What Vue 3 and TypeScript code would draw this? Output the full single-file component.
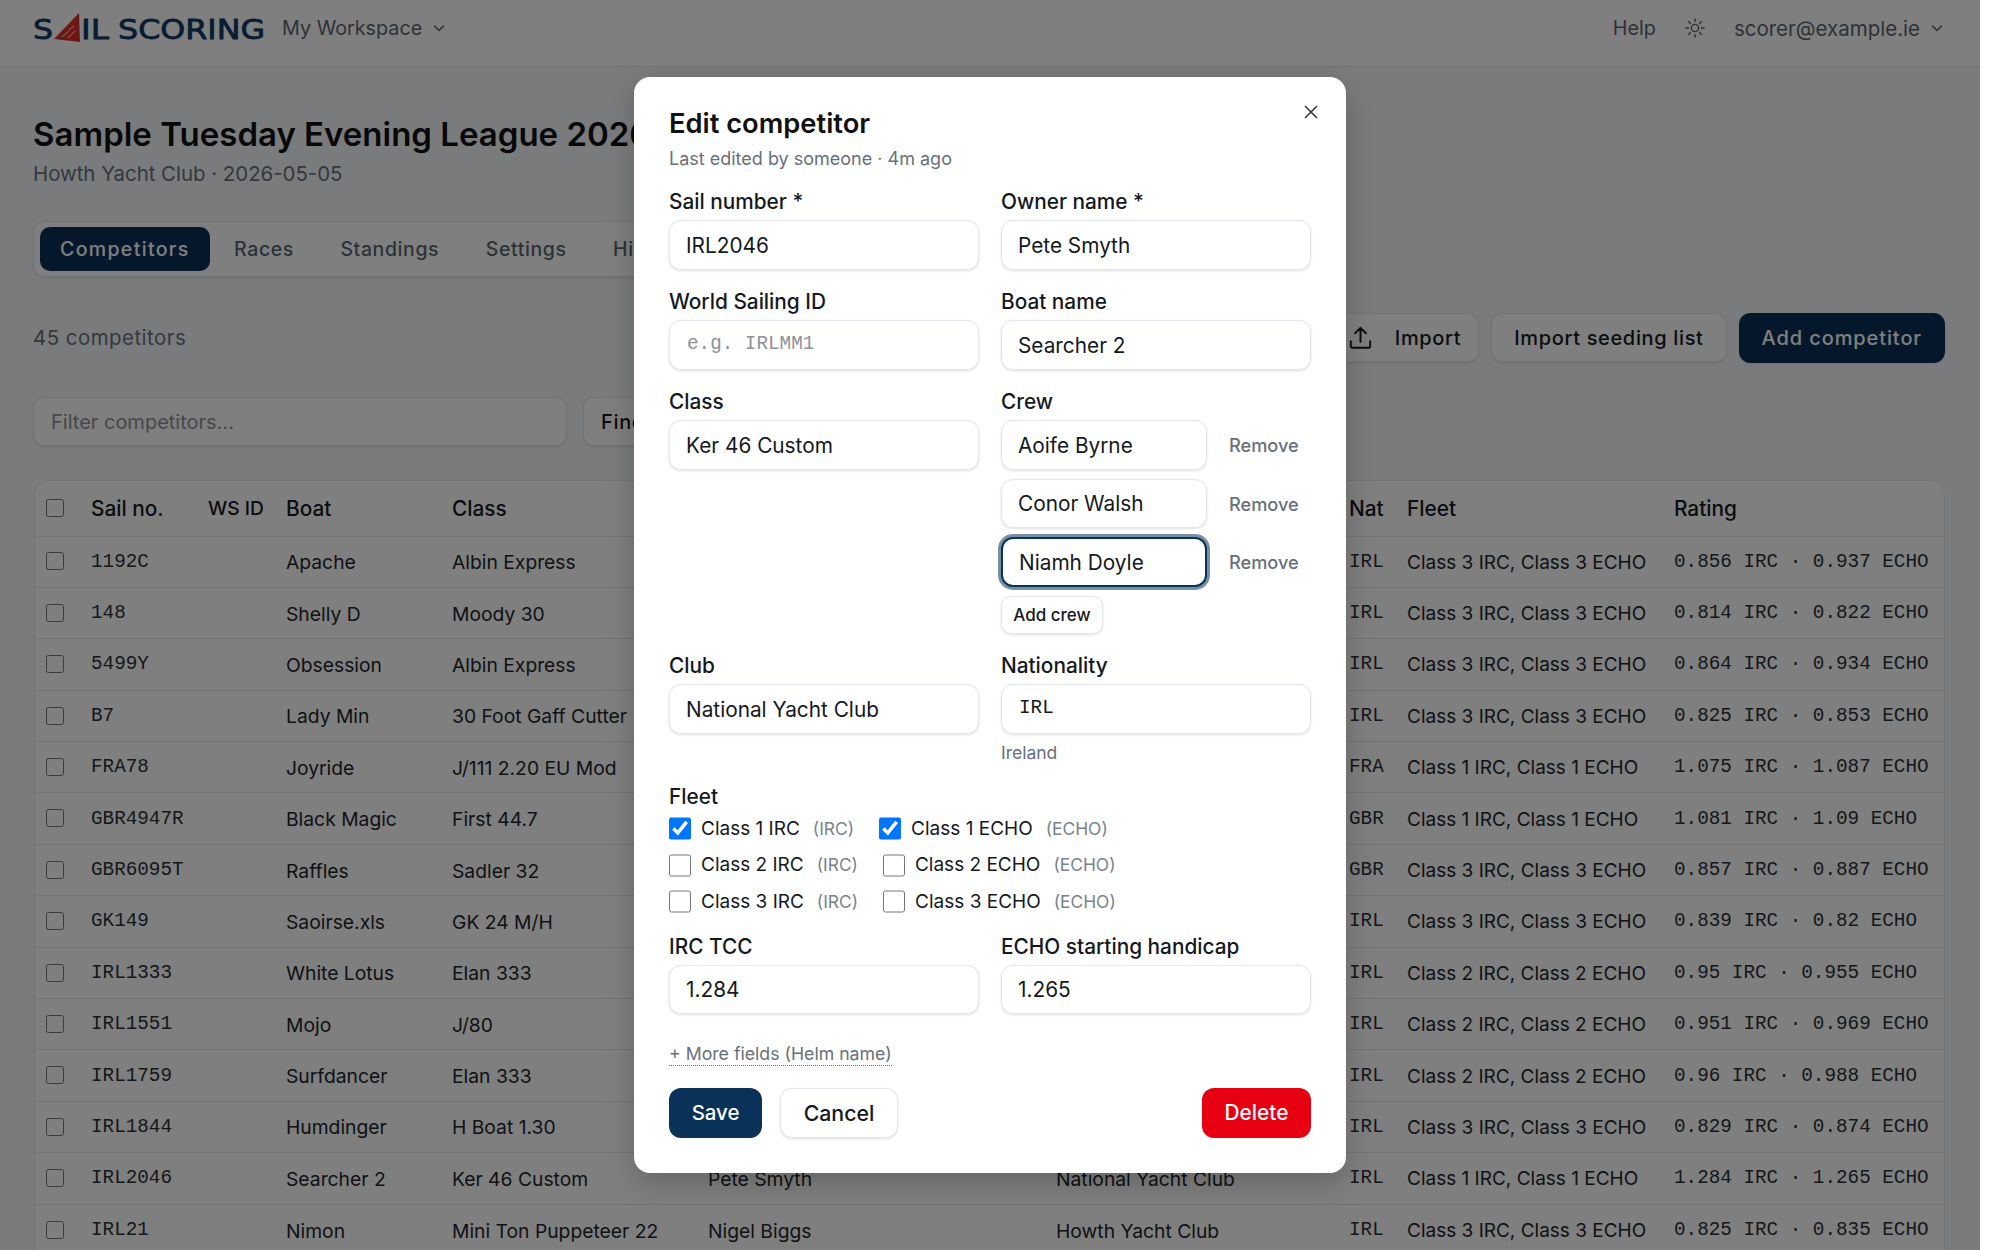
<script setup lang="ts">
import { ref } from 'vue'

interface Row {
  sail: string
  boat: string
  cls: string
  owner: string
  club: string
  nat: string
  fleet: number
  irc: string
  echo: string
}

const rows = ref<Row[]>([
  { sail: '1192C', boat: 'Apache', cls: 'Albin Express', owner: 'Tom Byrne', club: 'Howth Yacht Club', nat: 'IRL', fleet: 3, irc: '0.856', echo: '0.937' },
  { sail: '148', boat: 'Shelly D', cls: 'Moody 30', owner: 'Ann Daly', club: 'Howth Yacht Club', nat: 'IRL', fleet: 3, irc: '0.814', echo: '0.822' },
  { sail: '5499Y', boat: 'Obsession', cls: 'Albin Express', owner: 'Paul Kelly', club: 'Howth Yacht Club', nat: 'IRL', fleet: 3, irc: '0.864', echo: '0.934' },
  { sail: 'B7', boat: 'Lady Min', cls: '30 Foot Gaff Cutter', owner: 'Jim Ryan', club: 'Howth Yacht Club', nat: 'IRL', fleet: 3, irc: '0.825', echo: '0.853' },
  { sail: 'FRA78', boat: 'Joyride', cls: 'J/111 2.20 EU Mod', owner: 'Luc Martin', club: 'National Yacht Club', nat: 'FRA', fleet: 1, irc: '1.075', echo: '1.087' },
  { sail: 'GBR4947R', boat: 'Black Magic', cls: 'First 44.7', owner: 'Sam Hughes', club: 'Howth Yacht Club', nat: 'GBR', fleet: 1, irc: '1.081', echo: '1.09' },
  { sail: 'GBR6095T', boat: 'Raffles', cls: 'Sadler 32', owner: 'Ian Wood', club: 'Howth Yacht Club', nat: 'GBR', fleet: 3, irc: '0.857', echo: '0.887' },
  { sail: 'GK149', boat: 'Saoirse.xls', cls: 'GK 24 M/H', owner: 'Mary Nolan', club: 'Howth Yacht Club', nat: 'IRL', fleet: 3, irc: '0.839', echo: '0.82' },
  { sail: 'IRL1333', boat: 'White Lotus', cls: 'Elan 333', owner: 'Sean Burke', club: 'Howth Yacht Club', nat: 'IRL', fleet: 2, irc: '0.95', echo: '0.955' },
  { sail: 'IRL1551', boat: 'Mojo', cls: 'J/80', owner: 'Cian Lynch', club: 'Howth Yacht Club', nat: 'IRL', fleet: 2, irc: '0.951', echo: '0.969' },
  { sail: 'IRL1759', boat: 'Surfdancer', cls: 'Elan 333', owner: 'Orla Walsh', club: 'Howth Yacht Club', nat: 'IRL', fleet: 2, irc: '0.96', echo: '0.988' },
  { sail: 'IRL1844', boat: 'Humdinger', cls: 'H Boat 1.30', owner: 'Kate Moran', club: 'Howth Yacht Club', nat: 'IRL', fleet: 3, irc: '0.829', echo: '0.874' },
  { sail: 'IRL2046', boat: 'Searcher 2', cls: 'Ker 46 Custom', owner: 'Pete Smyth', club: 'National Yacht Club', nat: 'IRL', fleet: 1, irc: '1.284', echo: '1.265' },
  { sail: 'IRL21', boat: 'Nimon', cls: 'Mini Ton Puppeteer 22', owner: 'Nigel Biggs', club: 'Howth Yacht Club', nat: 'IRL', fleet: 3, irc: '0.825', echo: '0.835' }
])

const tabs = ['Competitors', 'Races', 'Standings', 'Settings', 'History']
const crew = ref(['Aoife Byrne', 'Conor Walsh', 'Niamh Doyle'])
const fleets = [1, 2, 3]
</script>

<template>
  <div class="page">
    <header class="topbar">
      <div class="top-left">
        <svg class="logo" width="234" height="32" viewBox="0 0 234 32">
          <text class="logo-text" x="0" y="27" textLength="20" lengthAdjust="spacingAndGlyphs">S</text>
          <polygon points="46,1 21,27 47,30" fill="#d8322a" />
          <path d="M29 25l7-6M35 26l7-7M41 14l-5 4" stroke="#eee" stroke-width="1" fill="none" />
          <text class="logo-text" x="48" y="27" textLength="28" lengthAdjust="spacingAndGlyphs">IL</text>
          <text class="logo-text" x="85" y="27" textLength="147" lengthAdjust="spacingAndGlyphs">SCORING</text>
        </svg>
        <span class="nav-text">My Workspace</span>
        <svg class="chev" width="14" height="14" viewBox="0 0 14 14"><path d="M2.5 5l4.500 4.500L11.500 5" /></svg>
      </div>
      <div class="top-right">
        <span class="nav-text">Help</span>
        <svg class="sun" width="22" height="22" viewBox="0 0 24 24">
          <circle cx="12" cy="12" r="4" />
          <path d="M12 2v3M12 19v3M2 12h3M19 12h3M5 5l2 2M17 17l2 2M5 19l2-2M17 7l2-2" />
        </svg>
        <span class="nav-text email">scorer@example.ie</span>
        <svg class="chev" width="14" height="14" viewBox="0 0 14 14"><path d="M2.5 5l4.500 4.500L11.500 5" /></svg>
      </div>
    </header>

    <main class="content">
      <h1>Sample Tuesday Evening League 2026</h1>
      <p class="sub">Howth Yacht Club · 2026-05-05</p>

      <nav class="tabs">
        <span v-for="(t, i) in tabs" :key="t" class="tab" :class="{ active: i === 0 }">{{ t }}</span>
      </nav>

      <div class="toolbar">
        <span class="count">45 competitors</span>
        <div class="actions">
          <button class="btn import">
            <svg width="29" height="29" viewBox="0 0 24 24"><path d="M4 15v4a1.500 1.500 0 0 0 1.500 1.500h13A1.500 1.500 0 0 0 20 19v-4M12 15.500V4M7.500 8.500L12 4l4.500 4.500" /></svg>
            Import
          </button>
          <button class="btn">Import seeding list</button>
          <button class="btn primary">Add competitor</button>
        </div>
      </div>

      <div class="filters">
        <input class="filter" placeholder="Filter competitors..." />
        <button class="btn find">Find duplicates</button>
      </div>

      <div class="table-wrap">
        <table>
          <colgroup>
            <col style="width: 44px" /><col style="width: 117px" /><col style="width: 78px" /><col style="width: 166px" />
            <col style="width: 256px" /><col style="width: 348px" /><col style="width: 293px" /><col style="width: 58px" />
            <col style="width: 267px" /><col style="width: 283px" />
          </colgroup>
          <thead>
            <tr>
              <th class="sel"><input type="checkbox" /></th>
              <th>Sail no.</th><th class="tight">WS ID</th><th>Boat</th><th>Class</th><th>Owner</th><th>Club</th><th>Nat</th><th>Fleet</th><th>Rating</th>
            </tr>
          </thead>
          <tbody>
            <tr v-for="r in rows" :key="r.sail">
              <td class="sel"><input type="checkbox" /></td>
              <td class="mono">{{ r.sail }}</td>
              <td></td>
              <td>{{ r.boat }}</td>
              <td class="nowrap">{{ r.cls }}</td>
              <td>{{ r.owner }}</td>
              <td>{{ r.club }}</td>
              <td class="mono">{{ r.nat }}</td>
              <td class="fleet-cell">Class {{ r.fleet }} IRC, Class {{ r.fleet }} ECHO</td>
              <td class="mono">{{ r.irc }} IRC · {{ r.echo }} ECHO</td>
            </tr>
          </tbody>
        </table>
      </div>
    </main>

    <div class="overlay">
      <section class="modal">
        <button class="close" aria-label="Close">
          <svg width="16" height="16" viewBox="0 0 16 16"><path d="M2 2l12 12M14 2L2 14" /></svg>
        </button>
        <h2>Edit competitor</h2>
        <p class="edited">Last edited by someone · 4m ago</p>

        <div class="form-grid">
          <div class="field">
            <label>Sail number *</label>
            <input value="IRL2046" />
          </div>
          <div class="field">
            <label>Owner name *</label>
            <input value="Pete Smyth" />
          </div>
          <div class="field">
            <label>World Sailing ID</label>
            <input class="mono-input" placeholder="e.g. IRLMM1" />
          </div>
          <div class="field">
            <label>Boat name</label>
            <input value="Searcher 2" />
          </div>
          <div class="field">
            <label>Class</label>
            <input value="Ker 46 Custom" />
          </div>
          <div class="field">
            <label>Crew</label>
            <div class="crew-list">
              <div v-for="(c, i) in crew" :key="c" class="crew-row">
                <input :value="c" :class="{ focused: i === 2 }" />
                <button class="remove">Remove</button>
              </div>
              <button class="add-crew">Add crew</button>
            </div>
          </div>
          <div class="field">
            <label>Club</label>
            <input value="National Yacht Club" />
          </div>
          <div class="field">
            <label>Nationality</label>
            <input class="mono-input" value="IRL" />
            <span class="hint">Ireland</span>
          </div>
        </div>

        <div class="fleet">
          <label>Fleet</label>
          <div v-for="n in fleets" :key="n" class="fleet-row">
            <span class="fleet-opt">
              <input type="checkbox" :checked="n === 1" />
              <span>Class {{ n }} IRC</span>
              <em>(IRC)</em>
            </span>
            <span class="fleet-opt">
              <input type="checkbox" :checked="n === 1" />
              <span>Class {{ n }} ECHO</span>
              <em>(ECHO)</em>
            </span>
          </div>
        </div>

        <div class="form-grid">
          <div class="field">
            <label>IRC TCC</label>
            <input value="1.284" />
          </div>
          <div class="field">
            <label>ECHO starting handicap</label>
            <input value="1.265" />
          </div>
        </div>

        <a class="more">+ More fields (Helm name)</a>

        <div class="footer">
          <button class="mbtn save">Save</button>
          <button class="mbtn cancel">Cancel</button>
          <button class="mbtn delete">Delete</button>
        </div>
      </section>
    </div>
  </div>
</template>

<style>
html,
body {
  margin: 0;
  overflow: hidden;
  background: #fff;
}
</style>

<style scoped>
.page {
  position: relative;
  width: 1980px;
  height: 1250px;
  overflow: hidden;
  background: #f4f7fb;
  font-family: Inter, "Liberation Sans", sans-serif;
  font-size: 19px;
  color: #15191e;
}

.topbar {
  height: 66px;
  box-sizing: content-box;
  padding: 0 36px 0 33px;
  display: flex;
  align-items: flex-start;
  justify-content: space-between;
  background: #fff;
  border-bottom: 1px solid #e2e6ea;
}

.top-left,
.top-right {
  display: flex;
  align-items: center;
  height: 56px;
}

.logo {
  margin-right: 15px;
}

.logo-text {
  font-family: "DejaVu Sans", sans-serif;
  font-size: 27px;
  font-weight: 400;
  fill: #123a64;
  stroke: #123a64;
  stroke-width: 0.8px;
}

.nav-text {
  color: #5b6570;
  font-size: 19.8px;
}

.nav-text.email {
  font-size: 20.5px;
}

.chev {
  margin-left: 10px;
  fill: none;
  stroke: #5b6570;
  stroke-width: 1.6;
  stroke-linecap: round;
  stroke-linejoin: round;
}

.sun {
  margin: 0 28px;
  fill: none;
  stroke: #5b6570;
  stroke-width: 1.5;
  stroke-linecap: round;
}

.content {
  padding: 0 35px 0 33px;
}

h1 {
  margin: 45px 0 0;
  font-size: 33px;
  line-height: 44px;
  font-weight: 600;
  white-space: nowrap;
  color: #111;
}

.sub {
  margin: 5px 0 0;
  font-size: 20.4px;
  line-height: 26px;
  color: #68707a;
}

.tabs {
  margin-top: 34px;
  width: 900px;
  height: 56px;
  box-sizing: border-box;
  padding: 5px 6px;
  display: flex;
  gap: 6.5px;
  background: #fff;
  border: 1px solid #e4e7eb;
  border-radius: 12px;
  box-shadow: 0 1px 3px rgba(0, 0, 0, 0.1);
}

.tab {
  padding: 0 20px;
  line-height: 45px;
  font-size: 19.5px;
  letter-spacing: 0.6px;
  color: #5b6570;
  font-weight: 500;
}

.tab.active {
  background: #0a3157;
  color: #fff;
  border-radius: 10px;
  letter-spacing: 1.35px;
  margin-right: -2px;
}

.toolbar {
  margin-top: 35.5px;
  height: 50px;
  display: flex;
  align-items: center;
  justify-content: space-between;
}

.count {
  color: #68707a;
  font-size: 20.4px;
  letter-spacing: 0.5px;
}

.actions {
  display: flex;
  gap: 12px;
  align-items: center;
}

.btn {
  height: 49px;
  padding: 0 22px;
  display: inline-flex;
  align-items: center;
  gap: 16px;
  font: 500 20px Inter, "Liberation Sans", sans-serif;
  letter-spacing: 0.65px;
  color: #15191e;
  background: #fff;
  border: 1px solid #e4e7eb;
  border-radius: 11px;
  box-shadow: 0 1px 3px rgba(0, 0, 0, 0.1);
}

.btn svg {
  fill: none;
  stroke: #15191e;
  stroke-width: 1.6;
  stroke-linecap: round;
  stroke-linejoin: round;
}

.btn.import {
  padding-left: 12px;
  padding-right: 17px;
  gap: 20px;
}

.btn.primary {
  height: 50px;
  background: #0a3157;
  border-color: #0a3157;
  color: #fff;
  letter-spacing: 0.9px;
}

.filters {
  margin-top: 34.5px;
  display: flex;
  gap: 16px;
}

.filter {
  width: 534px;
  height: 49px;
  box-sizing: border-box;
  padding: 0 17px;
  font: 20px Inter, "Liberation Sans", sans-serif;
  background: #fff;
  border: 1px solid #e4e7eb;
  border-radius: 11px;
  box-shadow: 0 1px 3px rgba(0, 0, 0, 0.1);
}

.filter::placeholder {
  color: #8a929b;
}

.find {
  padding: 0 17px;
}

.table-wrap {
  margin-top: 34px;
  margin-left: 1px;
  width: 1911px;
  background: #fff;
  border: 1px solid #e6e9ed;
  border-radius: 14px 14px 0 0;
  overflow: hidden;
  box-sizing: border-box;
}

table {
  width: 1910px;
  table-layout: fixed;
  border-collapse: collapse;
}

th {
  height: 55px;
  box-sizing: border-box;
  padding: 0 12px;
  text-align: left;
  font-weight: 500;
  font-size: 20.8px;
  color: #15191e;
  white-space: nowrap;
}

th.tight {
  font-size: 19.2px;
}

td {
  height: 51.4px;
  box-sizing: border-box;
  padding: 1px 12px 0;
  border-top: 1px solid #e2e6ea;
  font-size: 19.3px;
  color: #20252b;
  white-space: nowrap;
}

td.fleet-cell {
  font-size: 19px;
}

.nowrap {
  overflow: visible;
}

td.mono {
  font-family: "Liberation Mono", monospace;
  font-size: 19.3px;
  color: #2a3037;
  padding: 0 12px;
}

.sel,
td.sel {
  padding: 0 0 4px 11px;
}

.sel input {
  width: 18px;
  height: 18px;
  margin: 0;
  vertical-align: middle;
}

.overlay {
  position: absolute;
  inset: 0;
  display: flex;
  align-items: center;
  justify-content: center;
  background: rgba(0, 0, 0, 0.5);
}

.modal {
  position: relative;
  width: 712px;
  box-sizing: border-box;
  padding: 30px 35px 35px;
  background: #fff;
  border-radius: 16px;
  box-shadow: 0 10px 30px rgba(0, 0, 0, 0.2);
}

.close {
  position: absolute;
  top: 26px;
  right: 26px;
  padding: 0;
  width: 18px;
  height: 18px;
  background: none;
  border: 0;
}

.close svg {
  display: block;
  margin: 1px;
  fill: none;
  stroke: #333;
  stroke-width: 1.500;
}

h2 {
  margin: 0;
  font-size: 27.3px;
  line-height: 34px;
  font-weight: 600;
  color: #111;
}

.edited {
  margin: 6px 0 19px;
  font-size: 18px;
  line-height: 24px;
  color: #68707a;
}

.form-grid {
  display: grid;
  grid-template-columns: 310px 310px;
  column-gap: 22px;
  row-gap: 20.5px;
}

.field {
  display: flex;
  flex-direction: column;
  min-width: 0;
}

label {
  font-size: 20.8px;
  line-height: 24px;
  font-weight: 500;
  color: #15191e;
  margin-bottom: 6px;
}

.field input {
  height: 49.5px;
  box-sizing: border-box;
  width: 100%;
  padding: 0 16px;
  font: 20.8px Inter, "Liberation Sans", sans-serif;
  color: #15191e;
  background: #fff;
  border: 1px solid #e4e7eb;
  border-radius: 12px;
  box-shadow: 0 1px 3px rgba(0, 0, 0, 0.12);
  outline: none;
}

.field input.mono-input {
  font: 19.3px "Liberation Mono", monospace;
  padding: 0 17px 3px;
}

.field input::placeholder {
  color: #8a929b;
}

.crew-list {
  display: flex;
  flex-direction: column;
  align-items: flex-start;
  gap: 9px;
}

.crew-row {
  display: flex;
  align-items: center;
  width: 100%;
  gap: 12px;
}

.field .crew-row input {
  width: 206px;
}

.field .crew-row input.focused {
  border: 2px solid #0a3157;
  box-shadow: 0 0 0 3px rgba(10, 49, 87, 0.55);
}

.remove {
  padding: 0 10px;
  font: 500 18.2px Inter, "Liberation Sans", sans-serif;
  color: #68707a;
  background: none;
  border: 0;
}

.add-crew {
  width: 102px;
  height: 38px;
  padding: 0;
  font: 500 17px Inter, "Liberation Sans", sans-serif;
  color: #15191e;
  background: #fff;
  border: 1px solid #e4e7eb;
  border-radius: 10px;
  box-shadow: 0 1px 3px rgba(0, 0, 0, 0.12);
}

.hint {
  margin-top: 8.5px;
  font-size: 17.5px;
  line-height: 22px;
  color: #68707a;
}

.fleet {
  margin: 21px 0 20px;
}

.fleet label {
  display: block;
  margin-bottom: 6.5px;
}

.fleet-row {
  display: flex;
  gap: 25px;
  height: 26px;
  margin-bottom: 10.5px;
}

.fleet-row:last-child {
  margin-bottom: 0;
}

.fleet-opt {
  display: flex;
  align-items: center;
  line-height: 26px;
  font-size: 19px;
}

.fleet-opt input {
  width: 22px;
  height: 23px;
  margin: 0 10px 0 0;
}

.fleet-opt em {
  margin-left: 13px;
  font-style: normal;
  font-size: 17.4px;
  color: #7a828b;
}

.more {
  display: inline-block;
  margin-top: 28.5px;
  font-size: 17.7px;
  line-height: 22px;
  color: #68707a;
  border-bottom: 1px dotted #68707a;
}

.footer {
  margin-top: 22px;
  display: flex;
  gap: 18px;
}

.mbtn {
  height: 50px;
  padding: 0;
  font: 500 20.8px Inter, "Liberation Sans", sans-serif;
  border-radius: 12px;
  border: 1px solid transparent;
}

.save {
  width: 93px;
  color: #fff;
  background: #0a3157;
  font-size: 20.4px;
}

.cancel {
  width: 118px;
  color: #15191e;
  background: #fff;
  border-color: #e4e7eb;
  font-size: 21.3px;
  box-shadow: 0 1px 3px rgba(0, 0, 0, 0.12);
}

.delete {
  width: 109px;
  margin-left: auto;
  color: #fff;
  background: #e60012;
}
</style>
